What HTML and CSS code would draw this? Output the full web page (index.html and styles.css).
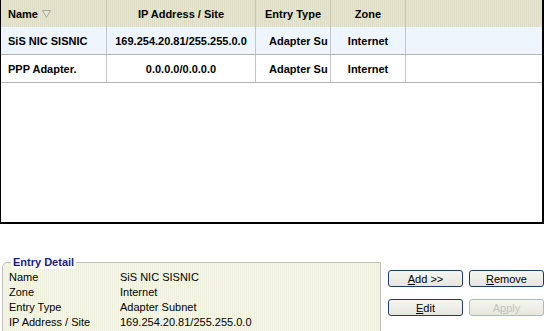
FILE: index.html
```html
<!DOCTYPE html>
<html lang="en">
<head>
  <meta charset="UTF-8" />
  <title>Trusted Zone Entries</title>
  <link rel="stylesheet" href="styles.css">
</head>
<body>

<div class="grid">
  <div class="row head">
    <div class="cell left">Name
      <svg class="sort" width="9" height="8" viewBox="0 0 9 8"><polygon points="0.5,0.5 8.5,0.5 4.5,7.5" fill="#e4e4dc" stroke="#a9a99a"/></svg>
    </div>
    <div class="cell">IP Address / Site</div>
    <div class="cell">Entry Type</div>
    <div class="cell">Zone</div>
    <div class="cell last"></div>
  </div>
  <div class="row selected">
    <div class="cell left">SiS NIC SISNIC</div>
    <div class="cell">169.254.20.81/255.255.0.0</div>
    <div class="cell clip">Adapter Su</div>
    <div class="cell">Internet</div>
    <div class="cell last"></div>
  </div>
  <div class="row">
    <div class="cell left">PPP Adapter.</div>
    <div class="cell">0.0.0.0/0.0.0.0</div>
    <div class="cell clip">Adapter Su</div>
    <div class="cell">Internet</div>
    <div class="cell last"></div>
  </div>
</div>

<div class="bottom">
  <fieldset class="detail">
    <legend>Entry Detail</legend>
    <div class="detail-rows">
      <span>Name</span><span>SiS NIC SISNIC</span>
      <span>Zone</span><span>Internet</span>
      <span>Entry Type</span><span>Adapter Subnet</span>
      <span>IP Address / Site</span><span>169.254.20.81/255.255.0.0</span>
    </div>
  </fieldset>

  <div class="buttons">
    <button><u>A</u>dd &gt;&gt;</button>
    <button><u>R</u>emove</button>
    <button><u>E</u>dit</button>
    <button disabled>A<u>p</u>ply</button>
  </div>
</div>

</body>
</html>
```

FILE: styles.css
```css
body {
  margin: 0;
  font-family: 'Liberation Sans', Arial, sans-serif;
  font-size: 11px;
  color: #000;
  background: #fff;
}

.grid {
  width: 544px;
  height: 224px;
  box-sizing: border-box;
  border-left: 1px solid #000;
  border-right: 2px solid #000;
  border-bottom: 2px solid #000;
  overflow: hidden;
}

.row {
  display: grid;
  grid-template-columns: 106px 149px 75px 75px 1fr;
  height: 28px;
  box-sizing: border-box;
  border-bottom: 1px solid #b4b4b4;
  font-weight: bold;
}

.row.head {
  height: 27px;
  border-bottom: none;
  background: repeating-linear-gradient(90deg, #e6e6cf 0 1px, #dedec6 1px 2px);
}

.row.selected {
  background: #eef5fd;
}

.cell {
  display: flex;
  align-items: center;
  justify-content: center;
  border-right: 1px solid #c4c4c4;
  white-space: nowrap;
  overflow: hidden;
}

.head .cell {
  border-right: 1px solid #c6c6ae;
}

.cell.left {
  justify-content: flex-start;
  padding-left: 7px;
}

.cell.clip {
  justify-content: flex-start;
  padding-left: 13px;
}

.cell.last {
  border-right: none;
}

.sort {
  margin-left: 4px;
}

.bottom {
  display: flex;
  align-items: flex-start;
  margin-top: 31px;
}

.detail {
  margin: 0 0 0 2px;
  padding: 0 6px;
  width: 379px;
  height: 90px;
  box-sizing: border-box;
  border: 1px solid #c2c2b4;
  border-radius: 5px 0 0 0;
  background: repeating-linear-gradient(90deg, #f6f7ea 0 1px, #eef0dc 1px 2px);
}

.detail legend {
  padding: 0 2px;
  margin-left: 2px;
  line-height: 14px;
  font-size: 11px;
  font-weight: bold;
  color: #1c1c84;
  background: #fff;
}

.detail-rows {
  display: grid;
  grid-template-columns: 111px 1fr;
  line-height: 15px;
  padding-top: 1px;
}

.buttons {
  display: grid;
  grid-template-columns: 75px 75px;
  column-gap: 6px;
  row-gap: 12px;
  margin-left: 7px;
  margin-top: 15px;
}

.buttons button {
  height: 17px;
  padding: 0;
  font-family: 'Liberation Sans', Arial, sans-serif;
  font-size: 11px;
  color: #000;
  border: 1px solid #1d3b6b;
  border-radius: 3px;
  background: linear-gradient(#f6f6f2, #e6e6de);
}

.buttons button:disabled {
  color: #c4c4ba;
  border-color: #a9b9cc;
}
```
